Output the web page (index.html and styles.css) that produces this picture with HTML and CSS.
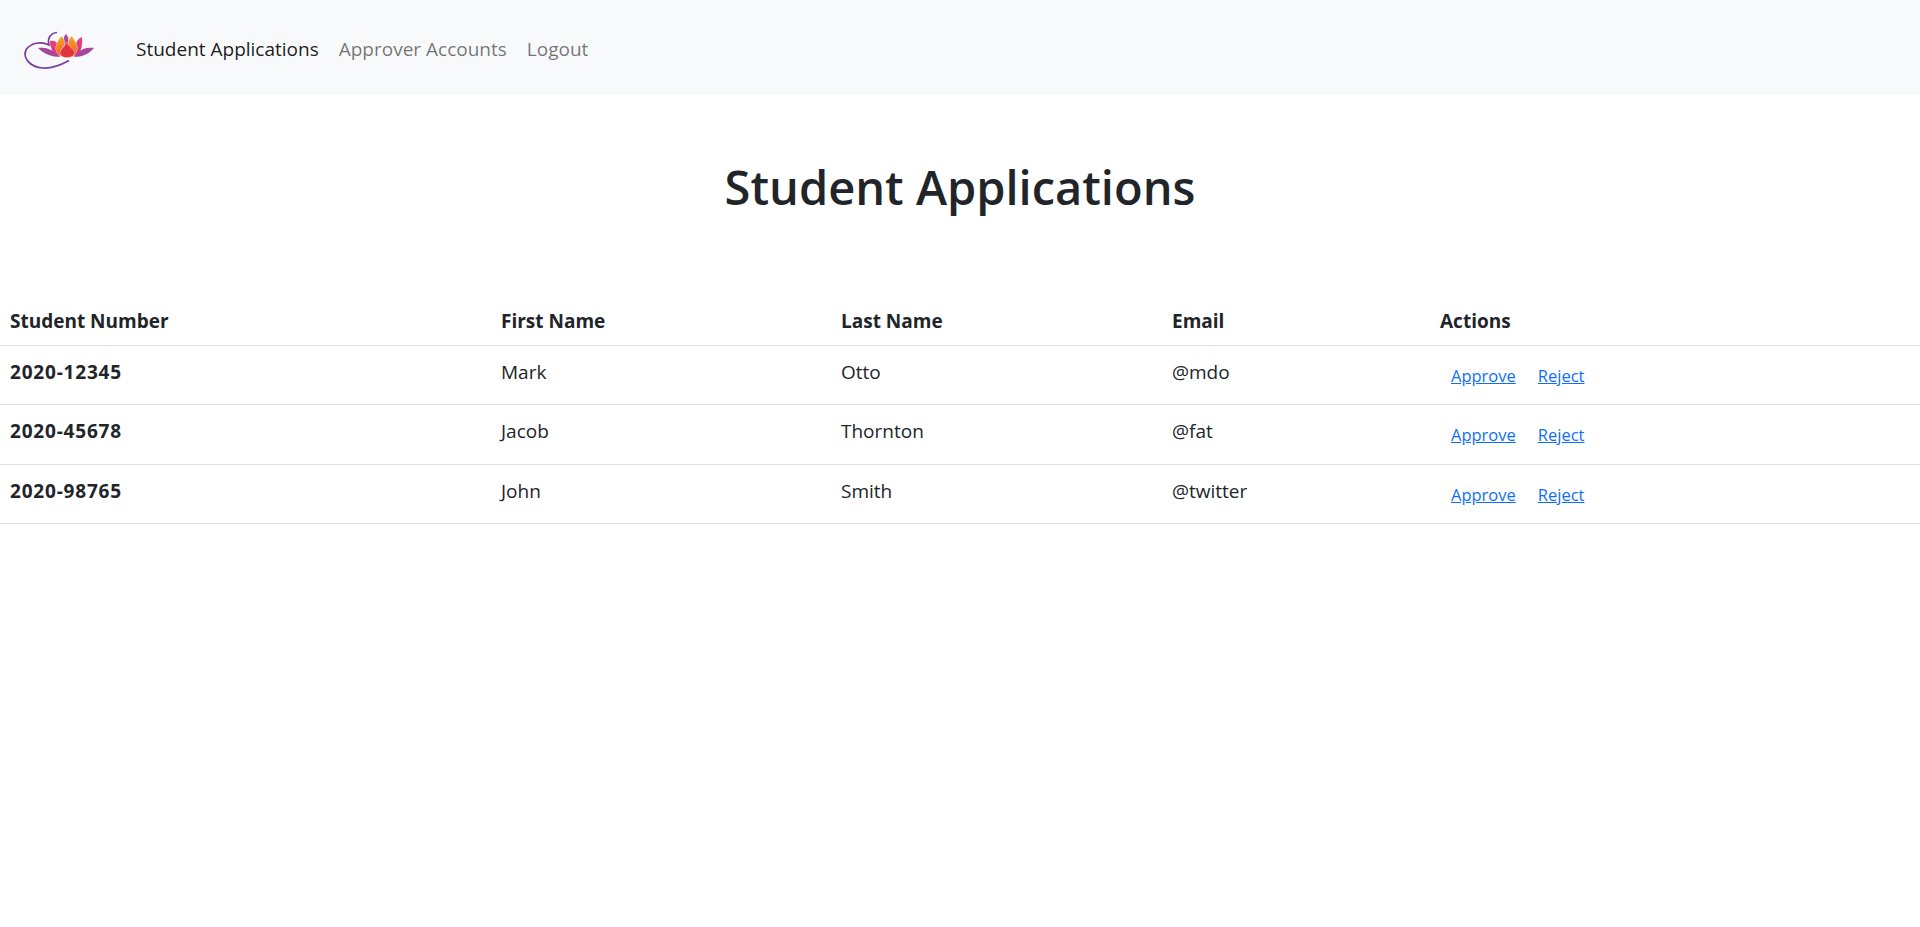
FILE: index.html
```html
<!DOCTYPE html>
<html lang="en">
<head>
  <meta charset="UTF-8" />
  <title>Student Applications</title>
  <link rel="stylesheet" href="styles.css">
</head>
<body>

  <nav class="navbar">
    <a class="brand" href="#">
      <svg class="logo" viewBox="0 0 120 96" width="120" height="96">
        <defs>
          <linearGradient id="petal" x1="0" y1="0" x2="0" y2="1">
            <stop offset="0" stop-color="#f9a51f"/>
            <stop offset="1" stop-color="#ee5a2a"/>
          </linearGradient>
          <linearGradient id="side" x1="0" y1="0" x2="0" y2="1">
            <stop offset="0" stop-color="#e8417e"/>
            <stop offset="1" stop-color="#d8327a"/>
          </linearGradient>
        </defs>
        <path d="M57 32.5 C51 33 47 38 49 45 C41 41 31 43 26.5 49 C22 57 29 67 43 68 C52 68.500 61 65 69 60.500" fill="none" stroke="#7b3c9f" stroke-width="1.700"/>
        <path d="M38 48 C45 47 51 49 56 53 L60 57 C52 57 44 54 38 48 Z" fill="#a5479f"/>
        <path d="M94 48 C87 47 81 49 77 53 L74 57 C82 57 89 54 94 48 Z" fill="#a5479f"/>
        <path d="M50 41 C53 40 56 41 58 44 L60 56 C54 55 50 49 50 41 Z" fill="url(#side)"/>
        <path d="M82 37 C79 38 77 40 76 44 L74 56 C80 55 83 47 82 37 Z" fill="url(#side)"/>
        <path d="M66 34 C68 36 69 39 68 44 L64 44 C63 39 64 36 66 34 Z" fill="#a64aa8"/>
        <path d="M61.500 36 C65 40 66 44 63 47 C60 50 60 53 61 57 C57 54 55 50 56 46 C57 42 59 39 61.500 36 Z" fill="url(#petal)" stroke="#ffe3d0" stroke-width="0.500"/>
        <path d="M71.500 36 C68 40 67 44 70 47 C73 50 73 53 72 57 C76 54 78 50 77 46 C76 42 74 39 71.500 36 Z" fill="url(#petal)" stroke="#ffe3d0" stroke-width="0.500"/>
        <path d="M66.500 42 C69 47 74 49 74.500 52 C75 56 71 57.500 67 57.500 C63 57.500 59.500 56 60 52 C60.500 49 64.500 47 66.500 42 Z" fill="#e2333a" stroke="#fbd3c8" stroke-width="0.500"/>
      </svg>
    </a>
    <ul class="nav-links">
      <li><a class="nav-link active" href="#">Student Applications</a></li>
      <li><a class="nav-link" href="#">Approver Accounts</a></li>
      <li><a class="nav-link" href="#">Logout</a></li>
    </ul>
  </nav>

  <h1 class="page-title">Student Applications</h1>

  <table class="app-table">
    <thead>
      <tr>
        <th class="col-number">Student Number</th>
        <th class="col-first">First Name</th>
        <th class="col-last">Last Name</th>
        <th class="col-email">Email</th>
        <th>Actions</th>
      </tr>
    </thead>
    <tbody>
      <tr>
        <th class="student-no">2020-12345</th>
        <td>Mark</td>
        <td>Otto</td>
        <td>@mdo</td>
        <td class="actions"><a href="#">Approve</a><a href="#">Reject</a></td>
      </tr>
      <tr>
        <th class="student-no">2020-45678</th>
        <td>Jacob</td>
        <td>Thornton</td>
        <td>@fat</td>
        <td class="actions"><a href="#">Approve</a><a href="#">Reject</a></td>
      </tr>
      <tr>
        <th class="student-no">2020-98765</th>
        <td>John</td>
        <td>Smith</td>
        <td>@twitter</td>
        <td class="actions"><a href="#">Approve</a><a href="#">Reject</a></td>
      </tr>
    </tbody>
  </table>

</body>
</html>
```

FILE: styles.css
```css
body {
  margin: 0;
  font-family: "Open Sans", "Noto Sans", sans-serif;
  background-color: #ffffff;
  color: #212529;
}

.navbar {
  display: flex;
  align-items: center;
  height: 95px;
  background-color: #f8f9fa;
}

.brand {
  display: block;
  height: 95px;
  width: 136px;
}

.logo {
  display: block;
}

.nav-links {
  display: flex;
  gap: 20px;
  margin: 2px 0 0;
  padding: 0;
  list-style: none;
}

.nav-link {
  font-size: 19px;
  color: rgba(0,0,0,0.55);
  text-decoration: none;
}

.nav-link.active {
  color: rgba(0,0,0,0.9);
}

.page-title {
  margin: 0;
  padding-top: 56px;
  height: 201px;
  box-sizing: border-box;
  font-size: 47px;
  font-weight: 600;
  line-height: 72px;
  text-align: center;
}

.app-table {
  width: 100%;
  border-collapse: collapse;
  table-layout: fixed;
  font-size: 19px;
}

.app-table th,
.app-table td {
  padding: 0 10px 6px;
  height: 52.33px;
  text-align: left;
  border-bottom: 1px solid #dee2e6;
}

.app-table thead th {
  height: 49px;
  padding: 0 10px;
}

.app-table th {
  font-weight: 700;
}

.app-table .student-no {
  letter-spacing: 0.8px;
}

.col-number {
  width: 471px;
}

.col-first {
  width: 320px;
}

.col-last {
  width: 311px;
}

.col-email {
  width: 248px;
}

.app-table .actions {
  padding-top: 0;
  padding-bottom: 0;
}

.actions a {
  margin-left: 11px;
  margin-right: 11px;
  font-size: 16.5px;
  color: #0d6efd;
}
```
